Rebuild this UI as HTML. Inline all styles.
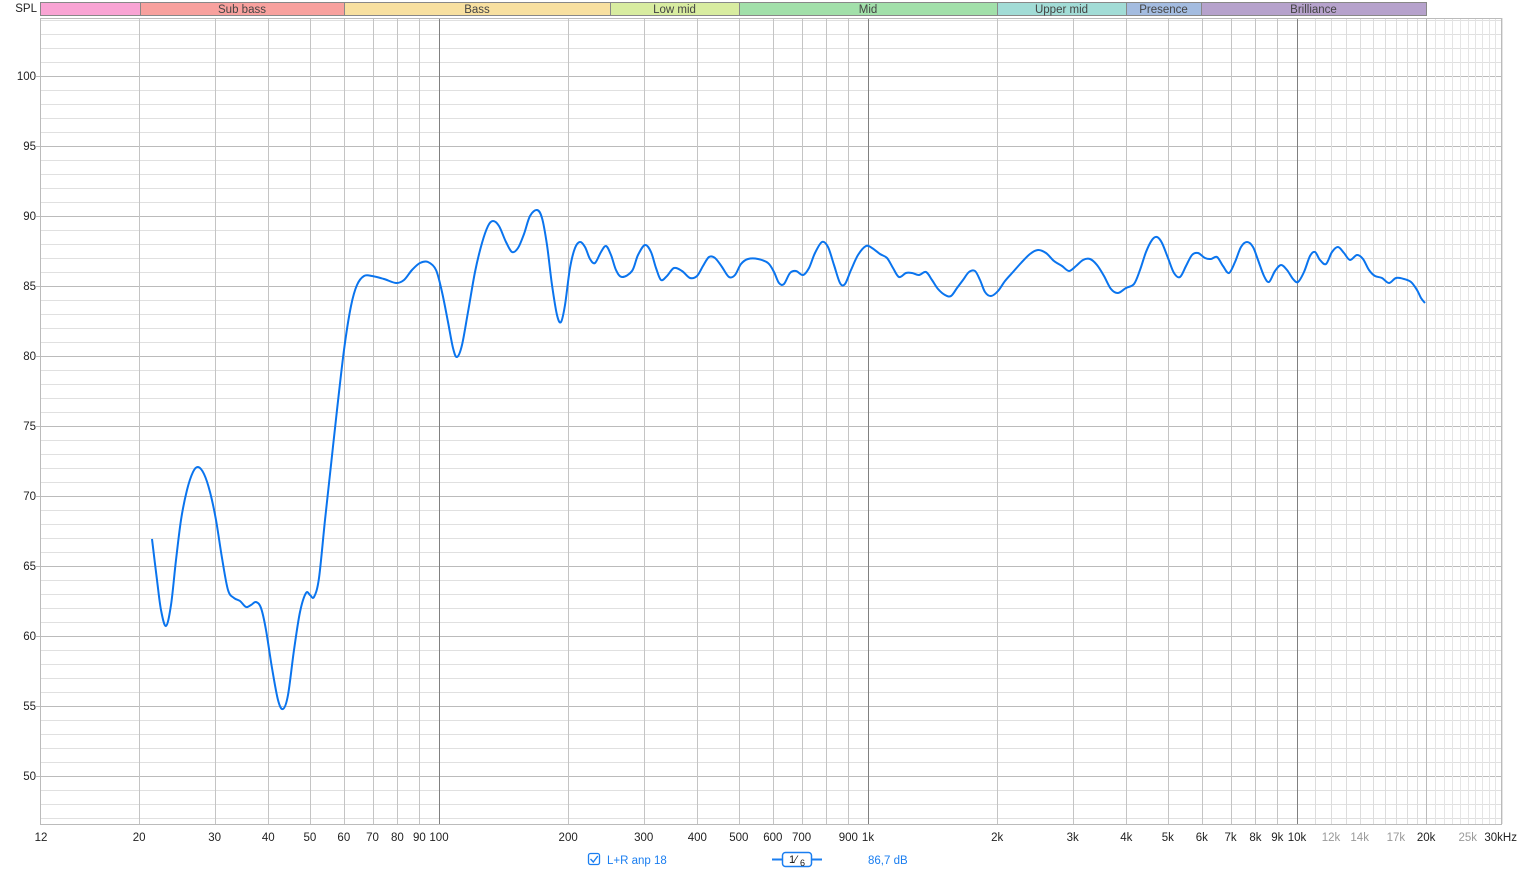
<!DOCTYPE html>
<html><head><meta charset="utf-8"><style>
html,body{margin:0;padding:0;background:#fff;width:1521px;height:871px;overflow:hidden}
svg{display:block}
text{font-family:"Liberation Sans",sans-serif;font-size:11.5px;fill:#222}
</style></head><body>
<svg id="s" width="1521" height="871" xmlns="http://www.w3.org/2000/svg"></svg>
<script>
const s=document.getElementById('s');let h='';
const X=f=>439+429*Math.log10(f/100);
const Y=d=>76+(100-d)*14;
const L=40,R=1501,T=18,B=824;
// bands
const bands=[[40,140,'#f9a4d4',''],[140,344,'#f8a19e','Sub bass'],[344,610,'#f8e0a0','Bass'],[610,739,'#d8eca0','Low mid'],[739,997,'#a2e0aa','Mid'],[997,1126,'#a2dcd6','Upper mid'],[1126,1201,'#a4bce0','Presence'],[1201,1426,'#b6a2cc','Brilliance']];
for(const b of bands){h+=`<rect x="${b[0]+.5}" y="2.5" width="${b[1]-b[0]}" height="13" fill="${b[2]}" stroke="#888"/>`;
if(b[3])h+=`<text x="${(b[0]+b[1])/2}" y="13" text-anchor="middle" style="fill:#444">${b[3]}</text>`;}
h+=`<text x="37" y="12" text-anchor="end">SPL</text>`;
// horizontal grid
for(let d=47;d<=104;d++){const y=Y(d);if(y<T||y>B)continue;const maj=d%5==0;
h+=`<line x1="${maj?36:L}" x2="${R}" y1="${y+.5}" y2="${y+.5}" stroke="${maj?'#bbb':'#e0e0e0'}"/>`;
if(maj)h+=`<text x="36" y="${y+4}" text-anchor="end">${d}</text>`;}
// vertical grid
let fs=[];for(let f=20;f<=90;f+=10)fs.push(f);for(let f=100;f<=900;f+=100)fs.push(f);for(let f=1000;f<=9000;f+=1000)fs.push(f);for(let f=10000;f<=30000;f+=1000)fs.push(f);
for(const f of fs){const x=Math.round(X(f));let c='#c4c4c4';
if(f==100||f==1000||f==10000)c='#808080';else if(f>10000&&f<20000)c='#dcdcdc';else if(f>20000)c='#e4e4e4';else if(f==20000)c='#bbb';
h+=`<line x1="${x+.5}" x2="${x+.5}" y1="${T}" y2="${B}" stroke="${c}"/>`;}
h+=`<rect x="${L+.5}" y="${T+.5}" width="${R-L}" height="${B-T}" fill="none" stroke="#bbb"/>`;
// x labels
const xl=[[12,'12'],[20,'20'],[30,'30'],[40,'40'],[50,'50'],[60,'60'],[70,'70'],[80,'80'],[90,'90'],[100,'100'],[200,'200'],[300,'300'],[400,'400'],[500,'500'],[600,'600'],[700,'700'],[900,'900'],[1000,'1k'],[2000,'2k'],[3000,'3k'],[4000,'4k'],[5000,'5k'],[6000,'6k'],[7000,'7k'],[8000,'8k'],[9000,'9k'],[10000,'10k'],[12000,'12k',1],[14000,'14k',1],[17000,'17k',1],[20000,'20k'],[25000,'25k',1]];
for(const l of xl){let x=l[0]==12?41:X(l[0]);h+=`<text x="${x}" y="841" text-anchor="middle" ${l[2]?'style="fill:#999"':''}>${l[1]}</text>`;}
h+=`<text x="1517" y="841" text-anchor="end">30kHz</text>`;
// curve
const p=[[152,539],[157,580],[161,610],[166,626],[171,605],[176,560],[181,520],[187,490],[193,472],[198,467],[204,474],[210,492],[216,520],[222,558],[228,590],[234,598],[240,601],[246,607],[251,605],[256,602],[261,608],[266,630],[272,668],[278,700],[283,709],[288,695],[294,650],[300,612],[306,593],[310,595],[314,597],[319,578],[325,520],[331,465],[337,410],[344,350],[351,306],[357,285],[364,276],[372,276],[384,279],[396,283],[404,280],[412,270],[420,263],[428,262],[436,270],[442,292],[448,322],[453,348],[457,357],[462,345],[468,312],[475,272],[482,243],[488,226],[493,221],[499,226],[506,242],[512,252],[518,248],[524,234],[530,216],[537,210],[542,218],[547,245],[552,285],[557,315],[561,322],[565,305],[570,268],[575,248],[580,242],[585,247],[590,259],[595,263],[601,252],[606,246],[611,255],[616,270],[622,277],[632,271],[638,255],[645,245],[651,252],[656,268],[661,280],[667,276],[674,268],[682,271],[690,278],[697,276],[703,266],[709,257],[715,258],[722,267],[729,277],[735,275],[741,264],[748,259],[758,259],[768,263],[774,272],[779,283],[784,284],[790,273],[796,271],[803,275],[809,268],[815,253],[822,242],[828,247],[834,265],[840,283],[845,284],[851,270],[858,255],[866,246],[872,248],[880,254],[887,258],[893,268],[899,277],[906,273],[912,273],[919,275],[926,272],[932,280],[938,289],[945,295],[951,296],[957,288],[963,280],[969,272],[975,271],[980,280],[985,292],[991,296],[998,291],[1005,281],[1013,272],[1021,263],[1030,254],[1038,250],[1046,253],[1054,261],[1062,266],[1069,271],[1076,266],[1083,260],[1090,259],[1097,265],[1104,276],[1111,289],[1118,293],[1126,288],[1134,284],[1140,270],[1146,252],[1152,240],[1157,237],[1162,243],[1168,258],[1174,273],[1180,277],[1186,266],[1192,255],[1198,253],[1205,258],[1211,259],[1217,257],[1223,266],[1229,273],[1235,262],[1241,247],[1247,242],[1253,247],[1258,260],[1264,276],[1269,282],[1275,271],[1281,265],[1287,270],[1293,279],[1298,282],[1304,272],[1310,256],[1315,252],[1320,260],[1326,264],[1332,252],[1338,247],[1344,253],[1350,260],[1357,255],[1363,259],[1369,270],[1375,276],[1382,278],[1389,283],[1396,278],[1404,279],[1411,282],[1417,290],[1421,298],[1425,303]];
let d=`M${p[0][0]},${p[0][1]}`;
for(let i=0;i<p.length-1;i++){const a=p[Math.max(0,i-1)],b=p[i],c=p[i+1],e=p[Math.min(p.length-1,i+2)];
d+=` C${(b[0]+(c[0]-a[0])/6).toFixed(1)},${(b[1]+(c[1]-a[1])/6).toFixed(1)} ${(c[0]-(e[0]-b[0])/6).toFixed(1)},${(c[1]-(e[1]-b[1])/6).toFixed(1)} ${c[0]},${c[1]}`;}
h+=`<path d="${d}" fill="none" stroke="#0a74ee" stroke-width="2" stroke-linejoin="round"/>`;
// legend
h+=`<rect x="588.5" y="853.5" width="11" height="11" rx="2" fill="#fff" stroke="#1a7ef0" stroke-width="1.3"/><path d="M590.5 859 l2.8 3 l4.5 -6" fill="none" stroke="#1a7ef0" stroke-width="1.4"/>`;
h+=`<text x="607" y="864" style="fill:#1a7ef0">L+R anp 18</text>`;
h+=`<line x1="772" x2="822" y1="859.5" y2="859.5" stroke="#1a7ef0" stroke-width="2"/><rect x="782.5" y="852.5" width="29" height="14" rx="3" fill="#fff" stroke="#1a7ef0" stroke-width="1.5"/><text x="789" y="863" style="font-size:11px;fill:#111">1⁄</text><text x="800" y="866" style="font-size:9px;fill:#111">6</text>`;
h+=`<text x="868" y="864" style="fill:#1a7ef0">86,7 dB</text>`;
s.innerHTML=h;
</script>
</body></html>
